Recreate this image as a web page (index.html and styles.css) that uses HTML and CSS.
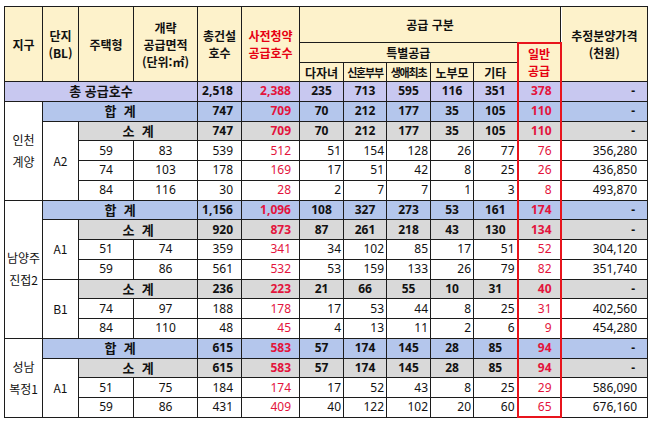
FILE: index.html
```html
<!DOCTYPE html>
<html lang="ko">
<head>
<meta charset="utf-8">
<link rel="stylesheet" href="styles.css">
</head>
<body>
<table class="supply">
<colgroup>
<col class="c38"><col class="c36"><col class="c55"><col class="c64"><col class="c44"><col class="c58">
<col class="c44"><col class="c43"><col class="c44"><col class="c43"><col class="c44"><col class="c43"><col class="c87">
</colgroup>
<thead>
<tr class="h1">
<th rowspan="3">지구</th>
<th rowspan="3">단지<br>(BL)</th>
<th rowspan="3">주택형</th>
<th rowspan="3">개략<br>공급면적<br>(단위:㎡)</th>
<th rowspan="3">총건설<br>호수</th>
<th rowspan="3" class="red">사전청약<br>공급호수</th>
<th colspan="6">공급 구분</th>
<th rowspan="3">추정분양가격<br>(천원)</th>
</tr>
<tr class="h2">
<th colspan="5">특별공급</th>
<th rowspan="2" class="red g gt">일반<br>공급</th>
</tr>
<tr class="h3">
<th>다자녀</th><th class="tight">신혼부부</th><th class="tight">생애최초</th><th>노부모</th><th>기타</th>
</tr>
</thead>
<tbody>
<tr class="tot">
<td colspan="4" class="lbl">총 공급호수</td>
<td class="r">2,518</td><td class="r red">2,388</td>
<td class="m">235</td><td class="m">713</td><td class="m">595</td><td class="m">116</td><td class="m">351</td>
<td class="r red g">378</td><td class="p">-</td>
</tr>

<tr class="sum">
<td rowspan="5" class="zone">인천<br>계양</td>
<td colspan="3" class="lbl">합&nbsp;&nbsp;계</td>
<td class="r">747</td><td class="r red">709</td>
<td class="m">70</td><td class="m">212</td><td class="m">177</td><td class="m">35</td><td class="m">105</td>
<td class="r red g">110</td><td class="p">-</td>
</tr>
<tr class="sub">
<td rowspan="4" class="blk">A2</td>
<td colspan="2" class="lbl">소&nbsp;&nbsp;계</td>
<td class="r">747</td><td class="r red">709</td>
<td class="m">70</td><td class="m">212</td><td class="m">177</td><td class="m">35</td><td class="m">105</td>
<td class="r red g">110</td><td class="p">-</td>
</tr>
<tr><td class="c">59</td><td class="c">83</td><td class="r">539</td><td class="r red">512</td><td class="m">51</td><td class="m">154</td><td class="m">128</td><td class="m">26</td><td class="m">77</td><td class="r red g">76</td><td class="p">356,280</td></tr>
<tr><td class="c">74</td><td class="c">103</td><td class="r">178</td><td class="r red">169</td><td class="m">17</td><td class="m">51</td><td class="m">42</td><td class="m">8</td><td class="m">25</td><td class="r red g">26</td><td class="p">436,850</td></tr>
<tr><td class="c">84</td><td class="c">116</td><td class="r">30</td><td class="r red">28</td><td class="m">2</td><td class="m">7</td><td class="m">7</td><td class="m">1</td><td class="m">3</td><td class="r red g">8</td><td class="p">493,870</td></tr>

<tr class="sum">
<td rowspan="7" class="zone">남양주<br>진접2</td>
<td colspan="3" class="lbl">합&nbsp;&nbsp;계</td>
<td class="r">1,156</td><td class="r red">1,096</td>
<td class="m">108</td><td class="m">327</td><td class="m">273</td><td class="m">53</td><td class="m">161</td>
<td class="r red g">174</td><td class="p">-</td>
</tr>
<tr class="sub">
<td rowspan="3" class="blk">A1</td>
<td colspan="2" class="lbl">소&nbsp;&nbsp;계</td>
<td class="r">920</td><td class="r red">873</td>
<td class="m">87</td><td class="m">261</td><td class="m">218</td><td class="m">43</td><td class="m">130</td>
<td class="r red g">134</td><td class="p">-</td>
</tr>
<tr><td class="c">51</td><td class="c">74</td><td class="r">359</td><td class="r red">341</td><td class="m">34</td><td class="m">102</td><td class="m">85</td><td class="m">17</td><td class="m">51</td><td class="r red g">52</td><td class="p">304,120</td></tr>
<tr><td class="c">59</td><td class="c">86</td><td class="r">561</td><td class="r red">532</td><td class="m">53</td><td class="m">159</td><td class="m">133</td><td class="m">26</td><td class="m">79</td><td class="r red g">82</td><td class="p">351,740</td></tr>
<tr class="sub">
<td rowspan="3" class="blk">B1</td>
<td colspan="2" class="lbl">소&nbsp;&nbsp;계</td>
<td class="r">236</td><td class="r red">223</td>
<td class="m">21</td><td class="m">66</td><td class="m">55</td><td class="m">10</td><td class="m">31</td>
<td class="r red g">40</td><td class="p">-</td>
</tr>
<tr><td class="c">74</td><td class="c">97</td><td class="r">188</td><td class="r red">178</td><td class="m">17</td><td class="m">53</td><td class="m">44</td><td class="m">8</td><td class="m">25</td><td class="r red g">31</td><td class="p">402,560</td></tr>
<tr><td class="c">84</td><td class="c">110</td><td class="r">48</td><td class="r red">45</td><td class="m">4</td><td class="m">13</td><td class="m">11</td><td class="m">2</td><td class="m">6</td><td class="r red g">9</td><td class="p">454,280</td></tr>

<tr class="sum">
<td rowspan="4" class="zone">성남<br>복정1</td>
<td colspan="3" class="lbl">합&nbsp;&nbsp;계</td>
<td class="r">615</td><td class="r red">583</td>
<td class="m">57</td><td class="m">174</td><td class="m">145</td><td class="m">28</td><td class="m">85</td>
<td class="r red g">94</td><td class="p">-</td>
</tr>
<tr class="sub">
<td rowspan="3" class="blk">A1</td>
<td colspan="2" class="lbl">소&nbsp;&nbsp;계</td>
<td class="r">615</td><td class="r red">583</td>
<td class="m">57</td><td class="m">174</td><td class="m">145</td><td class="m">28</td><td class="m">85</td>
<td class="r red g">94</td><td class="p">-</td>
</tr>
<tr><td class="c">51</td><td class="c">75</td><td class="r">184</td><td class="r red">174</td><td class="m">17</td><td class="m">52</td><td class="m">43</td><td class="m">8</td><td class="m">25</td><td class="r red g">29</td><td class="p">586,090</td></tr>
<tr class="last"><td class="c">59</td><td class="c">86</td><td class="r">431</td><td class="r red">409</td><td class="m">40</td><td class="m">122</td><td class="m">102</td><td class="m">20</td><td class="m">60</td><td class="r red g gb">65</td><td class="p">676,160</td></tr>
</tbody>
</table>
</body>
</html>
```
FILE: styles.css
```css
body {
  margin: 0;
  background: #ffffff;
  font-family: "Noto Sans", "Noto Sans CJK KR", sans-serif;
  color: #111111;
}

.supply {
  border-collapse: collapse;
  table-layout: fixed;
  width: 643px;
  margin: 6px 0 0 4px;
  font-size: 12px;
}

.c38 { width: 38px; }
.c36 { width: 36px; }
.c55 { width: 55px; }
.c64 { width: 64px; }
.c44 { width: 44px; }
.c58 { width: 58px; }
.c43 { width: 43px; }
.c87 { width: 87px; }

.supply th,
.supply td {
  border: 1px solid #1c1c1c;
  padding: 0;
  line-height: 14px;
  white-space: nowrap;
  overflow: hidden;
}

.supply th {
  background: #fdf2cb;
  font-family: "Noto Sans CJK KR", sans-serif;
  font-weight: 700;
  font-size: 12px;
  text-align: center;
  vertical-align: middle;
  line-height: 17px;
}

.supply th.tight {
  font-size: 11px;
  letter-spacing: -1.2px;
}

.h1 { height: 36px; }
.h2 { height: 20px; }
.h3 { height: 19px; }

.supply tbody tr { height: 19.76px; }

.supply td { vertical-align: middle; background: #ffffff; }

.tot td { background: #c8c8f0; font-weight: 700; }
.sum td { background: #b4c6ec; font-weight: 700; }
.sub td { background: #d9d9d9; font-weight: 700; }

.supply td.zone,
.supply td.blk {
  background: #ffffff;
  font-weight: 400;
  font-family: "Noto Sans CJK KR", sans-serif;
}

.zone {
  text-align: center;
  line-height: 22px !important;
  font-size: 12px;
}

.blk { text-align: center; }

.lbl {
  text-align: center;
  font-family: "Noto Sans CJK KR", sans-serif;
  font-size: 13px;
}

.c { text-align: center; }
.r { text-align: right; padding-right: 8px !important; }
.m { text-align: right; padding-right: 2px !important; }
.p { text-align: right; padding-right: 10px !important; }

.tot .m, .sum .m, .sub .m { text-align: center; padding-right: 0 !important; }
.tot .p, .sum .p, .sub .p { padding-right: 12px !important; }

.red { color: #e3143c; }
.supply th.red { color: #e60012; }

.supply .g {
  border-left: 2px solid #e8141c;
  border-right: 2px solid #e8141c;
}
.supply .gt { border-top: 2px solid #e8141c; }
.supply .gb { border-bottom: 2px solid #e8141c; }
```
